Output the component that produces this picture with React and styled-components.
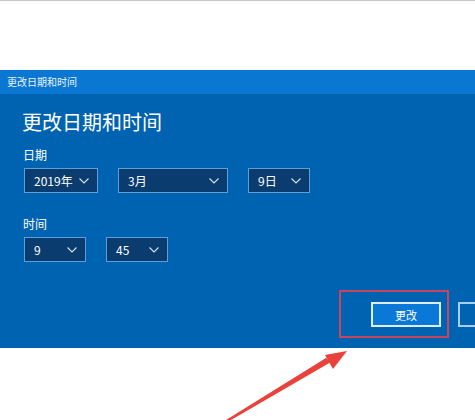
import styled, { createGlobalStyle } from "styled-components";

const GlobalStyle = createGlobalStyle`
  html, body {
    margin: 0;
    padding: 0;
    background: #ffffff;
  }
  body {
    font-family: "Noto Sans CJK SC", "Noto Sans", "Liberation Sans", sans-serif;
  }
`;

const Chevron = () => (
  <svg width="10" height="6" viewBox="0 0 10 6">
    <path d="M0.5 0.5 L5 5 L9.5 0.5" fill="none" stroke="#d6e6f5" strokeWidth="1.1" />
  </svg>
);

const Select = ({ value, width }) => (
  <Dropdown $width={width}>
    <span>{value}</span>
    <Chevron />
  </Dropdown>
);

const App = () => {
  return (
    <>
      <GlobalStyle />
      <Page>
        <TopArea />
        <Dialog>
          <TitleBar>更改日期和时间</TitleBar>
          <Body>
            <Heading>更改日期和时间</Heading>
            <Label>日期</Label>
            <Row $gap={20}>
              <Select value="2019年" width={74} />
              <Select value="3月" width={110} />
              <Select value="9日" width={62} />
            </Row>
            <Label $top={23}>时间</Label>
            <Row $gap={20}>
              <Select value="9" width={62} />
              <Select value="45" width={62} />
            </Row>
            <ButtonRow>
              <Highlighted>
                <Button $primary>更改</Button>
                <RedBox />
              </Highlighted>
              {/* cancel button, its label lies past the window edge */}
              <Button aria-label="取消" />
            </ButtonRow>
          </Body>
        </Dialog>
        <Arrow viewBox="0 0 475 420" width="475" height="420">
          <polygon points="226,420 231,420 331,362 326,358" fill="#e9413b" />
          <polygon points="347,351 325,355 333,369" fill="#e9413b" />
        </Arrow>
      </Page>
    </>
  );
};

export default App;

const Page = styled.div`
  position: relative;
  width: 475px;
  height: 420px;
  overflow: hidden;
  background: #ffffff;
`;

const TopArea = styled.div`
  height: 69px;
  border-top: 1px solid #c8c8c8;
  background: #ffffff;
`;

const Dialog = styled.section`
  width: 560px;
  background: #0063b1;
`;

const TitleBar = styled.div`
  height: 24px;
  line-height: 24px;
  padding-left: 7px;
  background: #0a77d2;
  color: #eaf3fb;
  font-size: 10px;
`;

const Body = styled.div`
  display: flex;
  flex-direction: column;
  padding: 14px 32px 21px 22px;
`;

const Heading = styled.h1`
  margin: 0;
  font-size: 20px;
  line-height: 28px;
  font-weight: 400;
  color: #ffffff;
`;

const Label = styled.div`
  margin-top: ${(p) => p.$top ?? 11}px;
  font-size: 12px;
  line-height: 16px;
  color: #ffffff;
  padding-left: 1px;
`;

const Row = styled.div`
  display: flex;
  gap: ${(p) => p.$gap}px;
  margin-top: 5px;
  padding-left: 2px;
`;

const Dropdown = styled.div`
  box-sizing: border-box;
  display: flex;
  align-items: center;
  justify-content: space-between;
  width: ${(p) => p.$width}px;
  height: 25px;
  padding: 0 8px 0 9px;
  background: #0b3c6f;
  border: 1px solid #5c9fdb;
  color: #ffffff;
  font-size: 12px;
`;

const ButtonRow = styled.div`
  display: flex;
  justify-content: flex-end;
  gap: 17px;
  margin-top: 40px;
`;

const Highlighted = styled.div`
  position: relative;
`;

const Button = styled.div`
  box-sizing: border-box;
  width: 70px;
  height: 25px;
  display: flex;
  align-items: center;
  justify-content: center;
  background: ${(p) => (p.$primary ? "#0a78d6" : "#0063b1")};
  border: 2px solid ${(p) => (p.$primary ? "#dceefb" : "#a9cdee")};
  color: #ffffff;
  font-size: 11px;
`;

const RedBox = styled.div`
  position: absolute;
  left: -32px;
  top: -12px;
  width: 110px;
  height: 48px;
  box-sizing: border-box;
  border: 2px solid #c9455d;
  pointer-events: none;
`;

const Arrow = styled.svg`
  position: absolute;
  left: 0;
  top: 0;
  pointer-events: none;
`;
